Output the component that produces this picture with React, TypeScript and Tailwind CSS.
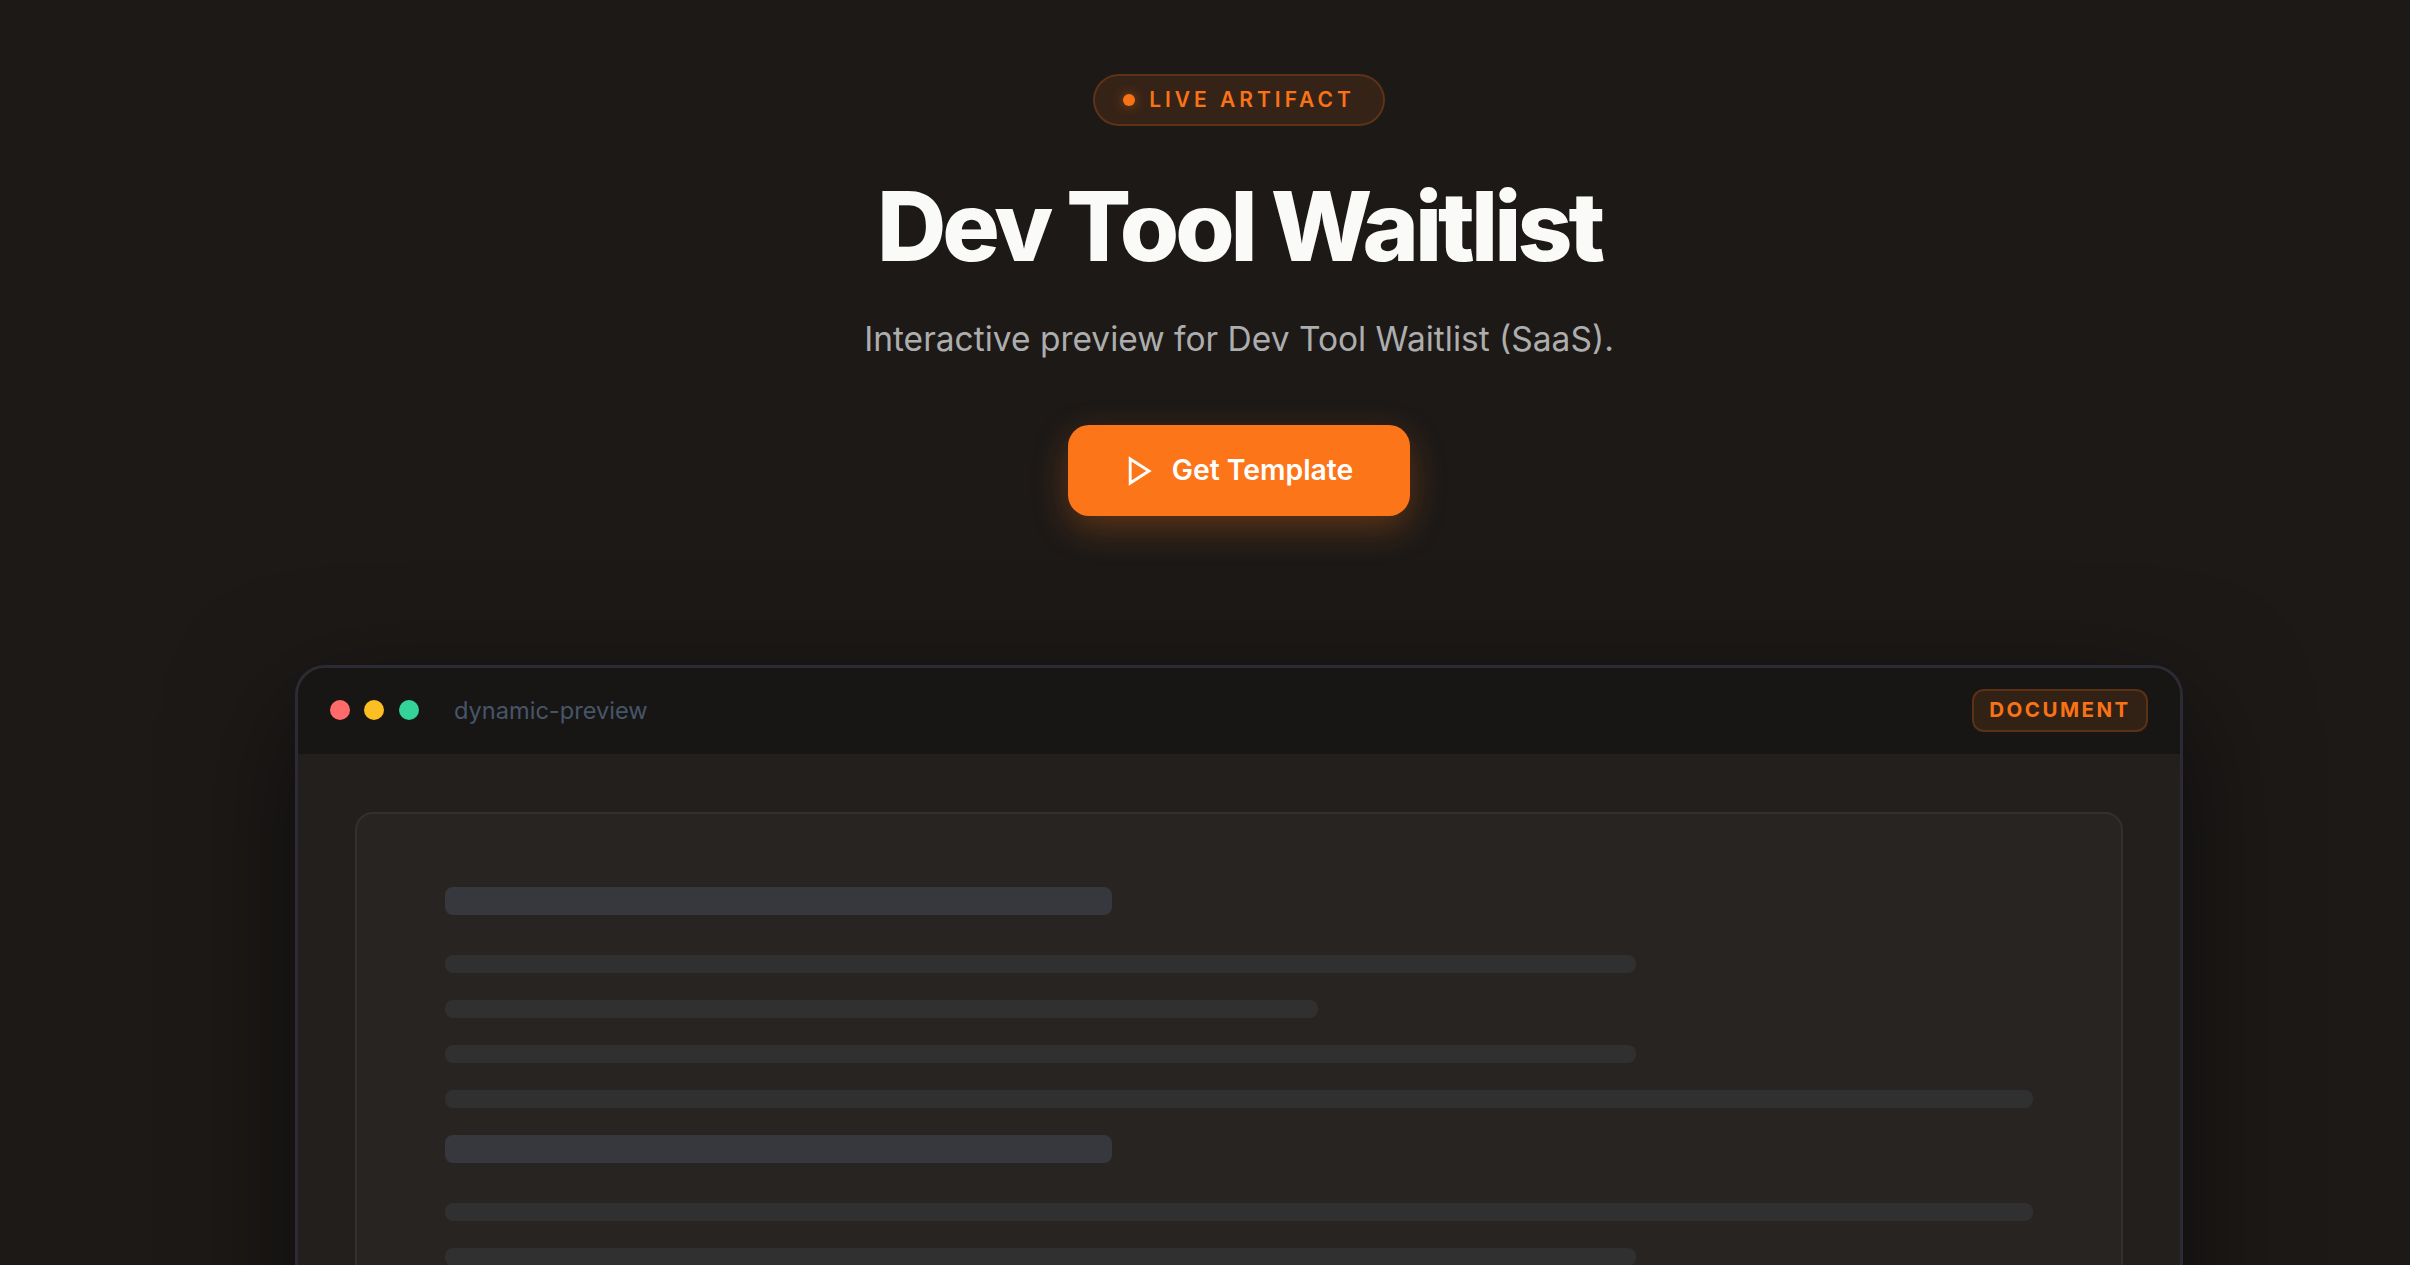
export default function App() {
  return (
    <div className="h-[1265px] overflow-hidden bg-[#1c1917] font-[Inter,sans-serif] pl-[68px] pt-[74px] flex flex-col items-center">
      <div className="h-[52px] w-[292px] shrink-0 flex items-center justify-center gap-[14px] rounded-full border-2 border-[#f9731633] bg-[#f973161f]">
        <span className="w-[12px] h-[12px] rounded-full bg-[#f97316] shadow-[0_0_12px_rgba(249,115,22,0.5)]" />
        <span className="pb-[2px] text-[21px] font-semibold tracking-[0.19em] text-[#f97316] leading-none">LIVE ARTIFACT</span>
      </div>
      <h1 className="mt-[47px] text-[96px] leading-[106px] font-extrabold tracking-[-0.042em] text-[#fafaf9]">Dev Tool Waitlist</h1>
      <p className="mt-[38px] text-[33.5px] leading-[45px] text-[#adadad]">Interactive preview for Dev Tool Waitlist (SaaS).</p>
      <button className="mt-[63px] w-[342px] h-[91px] shrink-0 flex items-center justify-center gap-[19px] pl-[3px] rounded-[21px] bg-[#fc7519] text-white text-[28.3px] font-semibold shadow-[0_12px_36px_rgba(249,115,22,0.3)]">
        <svg width="25" height="30" viewBox="0 0 25 30" fill="none" className="shrink-0">
          <path d="M2.2 3 L21 15 L2.2 27 Z" stroke="white" strokeWidth="2.9" strokeLinejoin="miter" />
        </svg>
        Get Template
      </button>
      <div className="mt-[149px] w-[1888px] shrink-0 rounded-[30px] border-[3px] border-[#2c2b33] bg-[#221f1c] shadow-[0_40px_120px_rgba(0,0,0,0.5)] overflow-hidden">
        <div className="h-[86px] pb-[1px] bg-[#171615] flex items-center justify-between pl-[32px] pr-[32px]">
          <div className="flex items-center">
            <span className="w-[20px] h-[20px] rounded-full bg-[#ff6b6b]" />
            <span className="ml-[14px] w-[20px] h-[20px] rounded-full bg-[#fbbf24]" />
            <span className="ml-[15px] w-[20px] h-[20px] rounded-full bg-[#34d399]" />
            <span className="ml-[35px] text-[23.6px] text-[#475569]">dynamic-preview</span>
          </div>
          <div className="h-[43px] w-[176px] flex items-center justify-center rounded-[12px] border-2 border-[#f9731633] bg-[#f973161f] text-[20.5px] font-bold tracking-[0.12em] text-[#f97316]">DOCUMENT</div>
        </div>
        <div className="pt-[58px] px-[57px] pb-[58px]">
          <div className="rounded-[18px] border-2 border-[#33312f] bg-[#282421] pt-[73px] px-[88px] pb-[73px]">
            <div className="h-[28px] w-[42%] rounded-[8px] bg-[#37373e]" />
            <div className="mt-[40px] flex flex-col gap-[27px]">
              <div className="h-[18px] w-[75%] rounded-[8px] bg-[#303030]" />
              <div className="h-[18px] w-[55%] rounded-[8px] bg-[#303030]" />
              <div className="h-[18px] w-[75%] rounded-[8px] bg-[#303030]" />
              <div className="h-[18px] w-full rounded-[8px] bg-[#303030]" />
            </div>
            <div className="mt-[27px] h-[28px] w-[42%] rounded-[8px] bg-[#37373e]" />
            <div className="mt-[40px] flex flex-col gap-[27px]">
              <div className="h-[18px] w-full rounded-[8px] bg-[#303030]" />
              <div className="h-[18px] w-[75%] rounded-[8px] bg-[#303030]" />
            </div>
          </div>
        </div>
      </div>
    </div>
  );
}
